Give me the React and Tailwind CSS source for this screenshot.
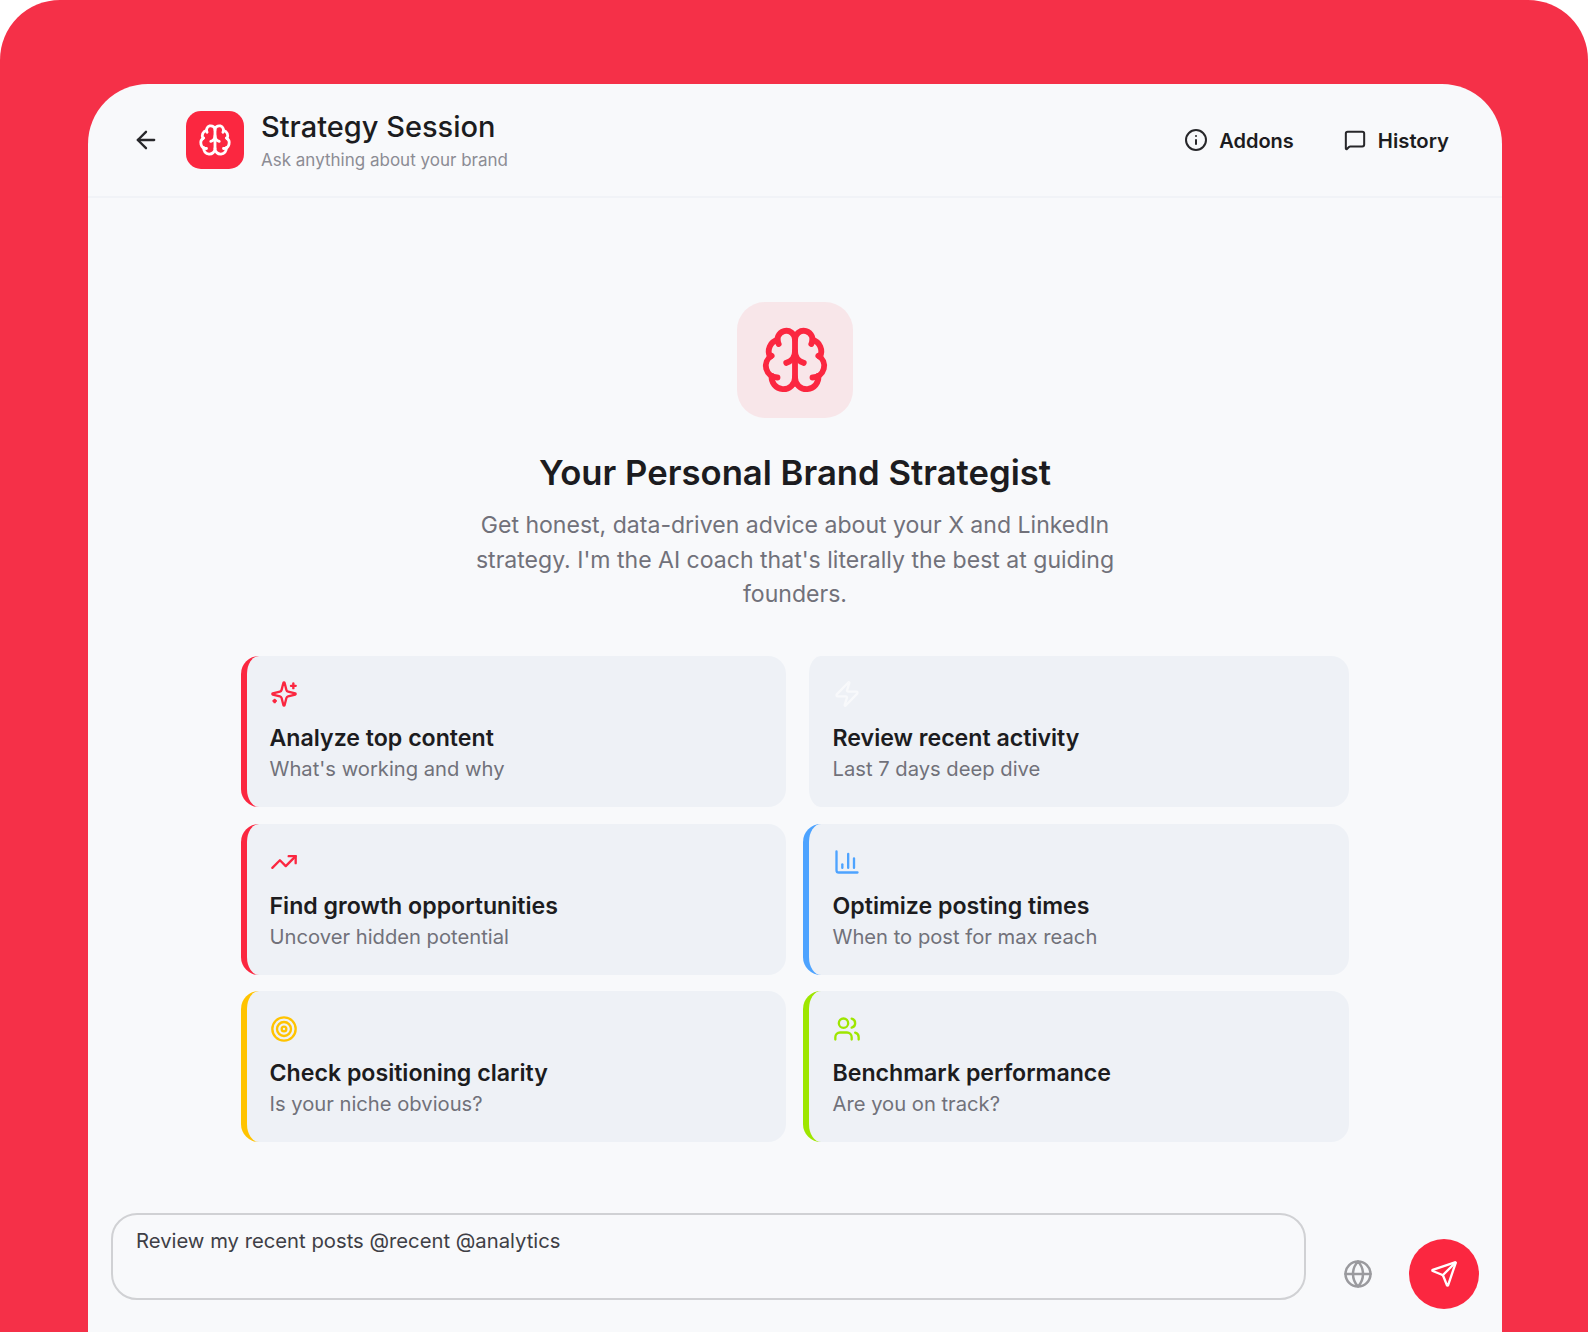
import React from "react";
import { ArrowLeft, Brain, Info, MessageSquare, Zap, TrendingUp, ChartColumn, Target, Users, Globe, Send } from "lucide-react";

function SparklesIcon({ className }) {
  return (
    <svg className={className} viewBox="0 0 24 24" fill="none" stroke="currentColor" strokeWidth="2" strokeLinecap="round" strokeLinejoin="round">
      <path d="M9.937 15.5A2 2 0 0 0 8.5 14.063l-6.135-1.582a.5.5 0 0 1 0-.962L8.5 9.936A2 2 0 0 0 9.937 8.5l1.582-6.135a.5.5 0 0 1 .963 0L14.063 8.5A2 2 0 0 0 15.5 9.937l6.135 1.581a.5.5 0 0 1 0 .964L15.5 14.063a2 2 0 0 0-1.437 1.437l-1.582 6.135a.5.5 0 0 1-.963 0z" />
      <path d="M20 3v4" />
      <path d="M22 5h-4" />
      <path d="M4 17v2" />
      <path d="M5 18H3" />
    </svg>
  );
}

const cards = [
  { Icon: SparklesIcon, title: "Analyze top content", sub: "What's working and why", border: "border-[#FB2740]", icon: "text-[#FB2740]" },
  { Icon: Zap, title: "Review recent activity", sub: "Last 7 days deep dive", border: "border-[#F8F9FB]", icon: "text-[#F8F9FB]" },
  { Icon: TrendingUp, title: "Find growth opportunities", sub: "Uncover hidden potential", border: "border-[#FB2740]", icon: "text-[#FB2740]" },
  { Icon: ChartColumn, title: "Optimize posting times", sub: "When to post for max reach", border: "border-[#4DA3FF]", icon: "text-[#4DA3FF]" },
  { Icon: Target, title: "Check positioning clarity", sub: "Is your niche obvious?", border: "border-[#FFC300]", icon: "text-[#FFC300]" },
  { Icon: Users, title: "Benchmark performance", sub: "Are you on track?", border: "border-[#9EE600]", icon: "text-[#9EE600]" },
];

export default function App() {
  return (
    <div className="h-[1332px] w-[1588px] overflow-hidden bg-white font-[Inter,sans-serif]">
      <div className="flex h-full flex-col rounded-t-[60px] bg-[#F53048] pl-[88px] pr-[86px] pt-[84px]">
        <div className="flex min-h-0 flex-1 flex-col rounded-t-[60px] bg-[#F8F9FB]">
          <header className="flex h-[114px] shrink-0 items-center justify-between border-b-2 border-[#F1F3F7] pl-[44px] pr-[53px]">
            <div className="flex items-center">
              <ArrowLeft className="h-[28px] w-[28px] text-[#27272A]" strokeWidth={2} />
              <div className="ml-[26px] flex h-[58px] w-[58px] items-center justify-center rounded-[15px] bg-[#FB2740]">
                <Brain className="h-[34px] w-[34px] text-white" strokeWidth={2} />
              </div>
              <div className="ml-[17px] pt-[2px]">
                <div className="text-[29px] font-[550] leading-[36px] text-[#1C1C20]">Strategy Session</div>
                <div className="mt-[2px] text-[17px] leading-[26px] text-[#8C8C94]">Ask anything about your brand</div>
              </div>
            </div>
            <div className="flex items-center">
              <Info className="h-[24px] w-[24px] text-[#27272A]" strokeWidth={2} />
              <span className="ml-[11px] mt-[1px] text-[20px] font-semibold text-[#1C1C20]">Addons</span>
              <MessageSquare className="ml-[50px] h-[22px] w-[22px] text-[#27272A]" strokeWidth={2.2} />
              <span className="ml-[12px] mt-[2px] text-[20.3px] font-semibold text-[#1C1C20]">History</span>
            </div>
          </header>
          <main className="flex flex-1 flex-col items-center pt-[104px]">
            <div className="flex h-[116px] w-[116px] items-center justify-center rounded-[28px] bg-[#F8E6E9]">
              <Brain className="h-[70px] w-[70px] text-[#FB2740]" strokeWidth={2} />
            </div>
            <h1 className="mt-[30px] text-[34.7px] font-semibold leading-[48px] text-[#1C1C20]">Your Personal Brand Strategist</h1>
            <p className="mt-[12px] w-[660px] text-center text-[23.05px] leading-[34.5px] text-[#71717A]">
              Get honest, data-driven advice about your X and LinkedIn strategy. I'm the AI coach that's literally the best at guiding founders.
            </p>
            <div className="mt-[44.5px] grid w-[1108px] grid-cols-[544.5px_546.5px] gap-x-[17px] gap-y-[16.5px]">
              {cards.map(({ Icon, title, sub, border, icon }) => (
                <div key={title} className={`h-[151px] rounded-[18px] border-l-[6px] bg-[#EEF1F6] pt-[24px] odd:pl-[22.5px] even:pl-[24px] ${border}`}>
                  <Icon className={`h-[28px] w-[28px] ${icon}`} strokeWidth={2} />
                  <div className="mt-[14px] text-[23.15px] font-semibold leading-[32px] text-[#1C1C20]">{title}</div>
                  <div className="text-[20.2px] leading-[30px] text-[#71717A]">{sub}</div>
                </div>
              ))}
            </div>
          </main>
          <div className="flex h-[191px] shrink-0 items-start pl-[23px] pt-[70.5px]">
            <div className="flex h-[96px] items-end">
              <div className="h-[87px] w-[1195px] self-start rounded-[26px] border-2 border-[#D0D1D4] pl-[23px] pt-[12px] text-[20.25px] leading-[28px] text-[#3F3F46]">
                Review my recent posts @recent @analytics
              </div>
              <div className="ml-[36.5px] flex h-[70px] items-center">
                <Globe className="h-[30px] w-[30px] text-[#9A9A9E]" strokeWidth={2} />
              </div>
              <div className="ml-[36px] flex h-[70px] w-[70px] items-center justify-center rounded-full bg-[#FB2740]">
                <Send className="h-[28px] w-[28px] text-white" strokeWidth={2} />
              </div>
            </div>
          </div>
        </div>
      </div>
    </div>
  );
}
